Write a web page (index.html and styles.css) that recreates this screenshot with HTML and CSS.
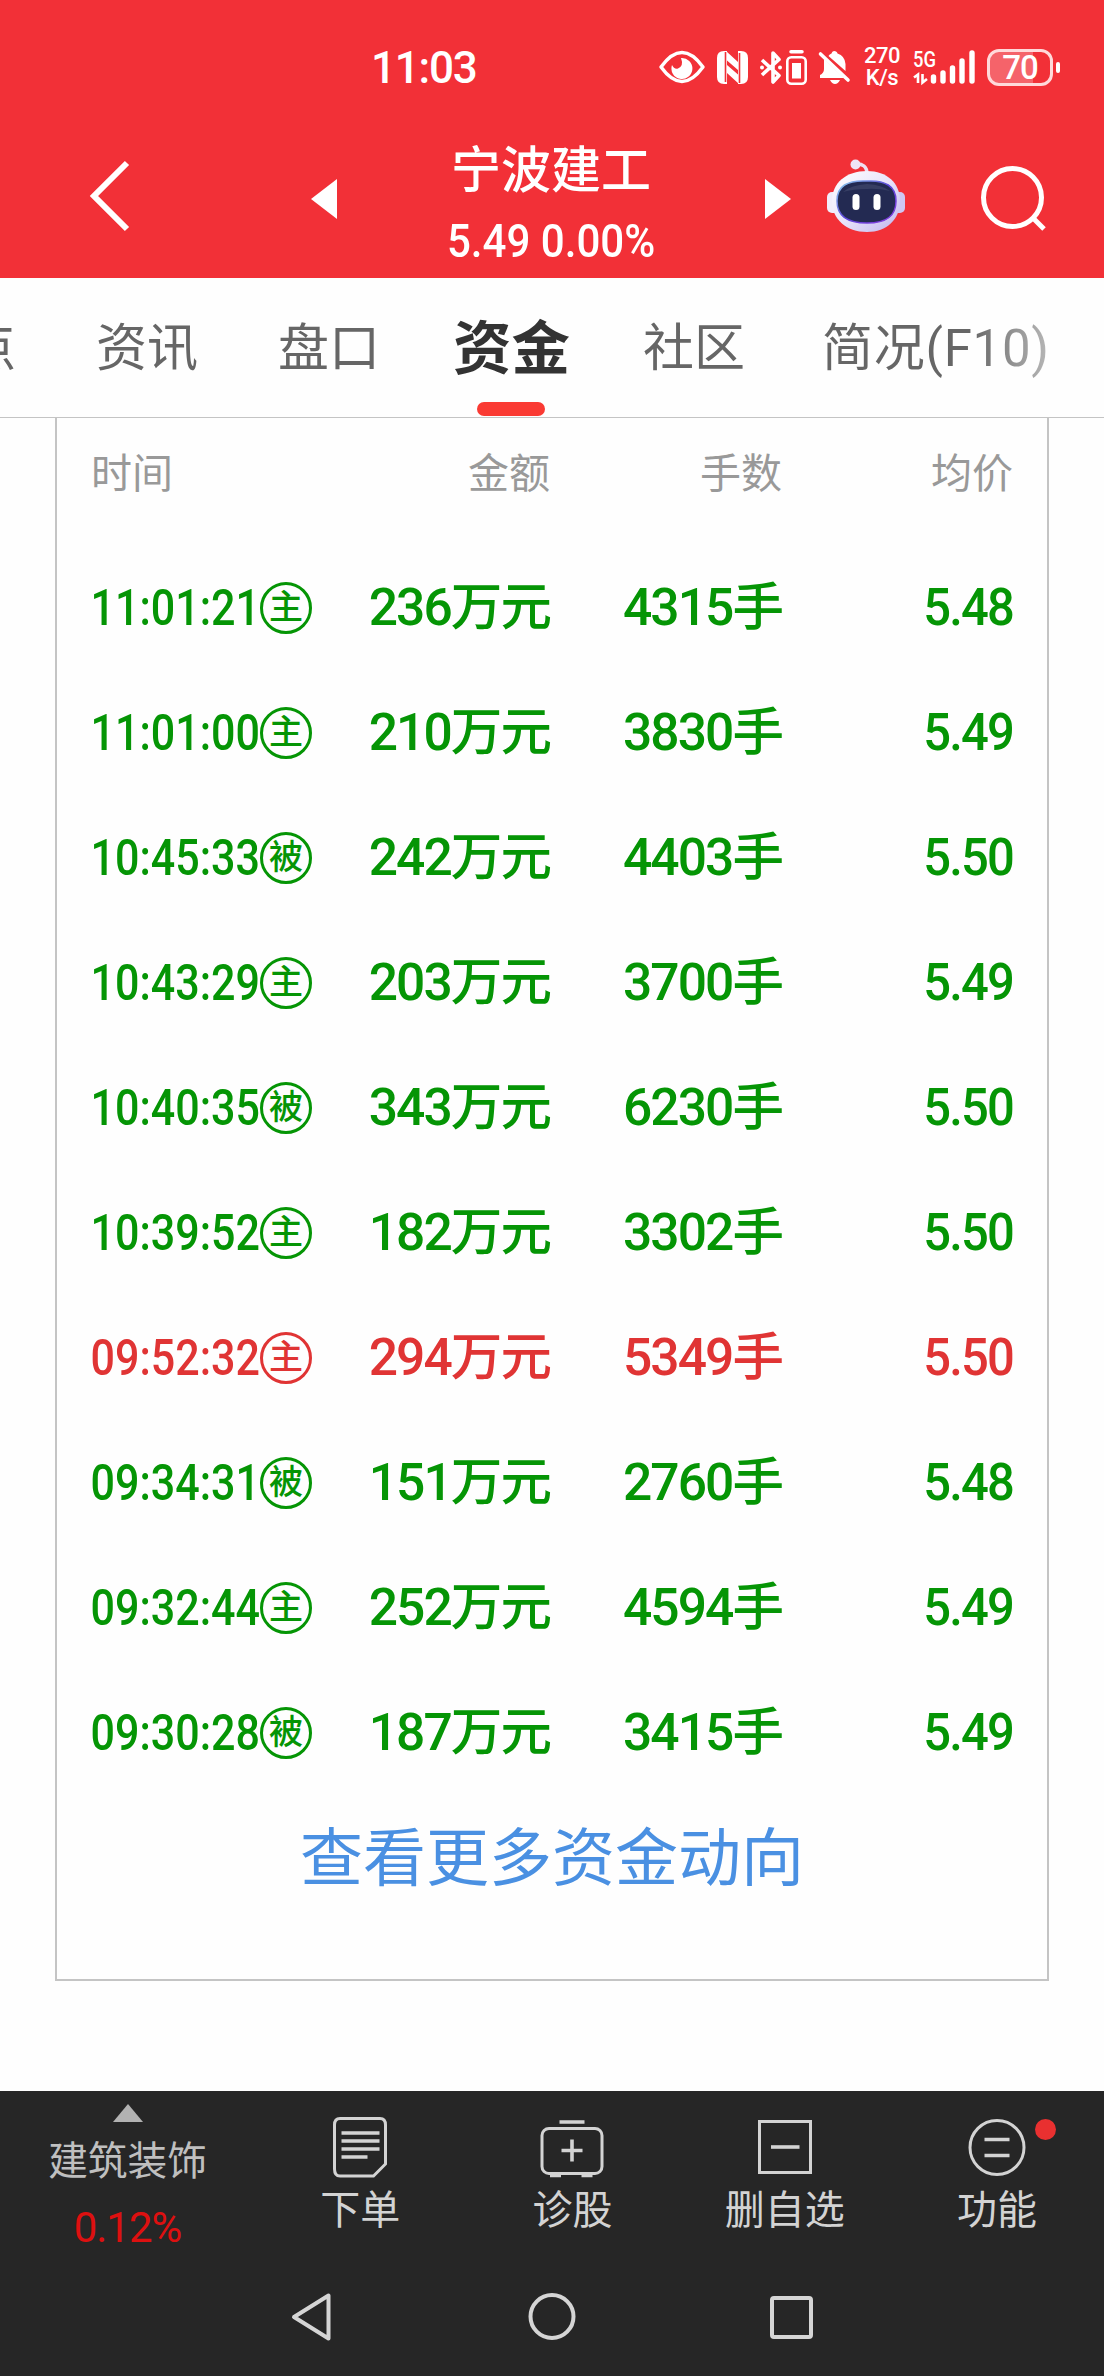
FILE: index.html
```html
<!DOCTYPE html>
<html lang="zh-CN">
<head>
  <meta charset="UTF-8" />
  <meta name="viewport" content="width=device-width, initial-scale=1.0" />
  <title>宁波建工 - 资金</title>
  <link rel="stylesheet" href="styles.css">
</head>
<body>
  <header class="header">
    <div class="status">
      <span class="clock">11:03</span>
      <svg class="eye" width="46" height="32" viewBox="0 0 46 32">
        <path d="M2 16 Q23 -13 44 16 Q23 45 2 16Z" fill="none" stroke="#fff" stroke-width="3.5" stroke-linejoin="round"/>
        <path d="M22 7 A10.5 10.5 0 1 1 13 14 Q15 18.500 19 17.500 Q25 15 22 7Z" fill="#fff"/>
      </svg>
      <svg class="nfc" width="31" height="33" viewBox="0 0 31 33">
        <path d="M7 0H10V33H7Q0 33 0 26V7Q0 0 7 0Z M21 0H24Q31 0 31 7V26Q31 33 24 33H21Z" fill="#fff"/>
        <path d="M9 0L21 11V19L10 9.500V33H7V0Z M22 33L10 22V14L21 23.500V0H24V33Z" fill="#fff"/>
        <path d="M8.500 1V31 M22.500 2V32" stroke="#f23037" stroke-width="1.600"/>
      </svg>
      <svg class="bt" width="23" height="35" viewBox="0 0 23 35">
        <path d="M2 10L19 25.500L13 32V3L19 9.500L2 25" fill="none" stroke="#fff" stroke-width="3.600" stroke-linejoin="round"/>
        <circle cx="2" cy="17.500" r="2" fill="#fff"/>
        <circle cx="20" cy="17.500" r="2" fill="#fff"/>
      </svg>
      <svg class="cell" width="21" height="35" viewBox="0 0 21 35">
        <path d="M5 1.800H16" stroke="#fff" stroke-width="3.500" stroke-linecap="round"/>
        <rect x="1.300" y="7.300" width="18.400" height="26.400" rx="4" fill="none" stroke="#fff" stroke-width="2.600"/>
        <rect x="6" y="13" width="9" height="15.500" fill="#fff"/>
      </svg>
      <svg class="bell" width="31" height="34" viewBox="0 0 31 34">
        <path d="M15 1Q18 1 18.500 3.500Q26 6 26.500 14V21L9.500 6Q10.500 4 12.500 3.500Q13 1 15 1Z" fill="#fff"/>
        <path d="M5 9L25 28H1V25Q5 23 5 19Z" fill="#fff"/>
        <path d="M11 30H21Q19 34 16 34Q13 34 11 30Z" fill="#fff"/>
        <path d="M1.500 4L29 30" stroke="#fff" stroke-width="3.600" stroke-linecap="round"/>
      </svg>
      <div class="speed"><span>270</span><span>K/s</span></div>
      <svg class="signal" width="63" height="36" viewBox="0 0 63 36">
        <text x="0" y="18" class="net" textLength="23" lengthAdjust="spacingAndGlyphs">5G</text>
        <path d="M1 28.500L5 25.500V34 M9.500 25V33.500L14 30" fill="none" stroke="#fff" stroke-width="2.600"/>
        <path d="M20.500 28V32M30 24V32M39.500 19V32M49 12V32M59 4V32" stroke="#fff" stroke-width="5.400" stroke-linecap="round"/>
      </svg>
      <div class="battery"><b>70</b></div>
      <i class="battery-tip"></i>
    </div>

    <div class="titlebar">
      <svg class="back" width="42" height="74" viewBox="0 0 42 74">
        <path d="M39 4L6 37L39 70" fill="none" stroke="#fff" stroke-width="6"/>
      </svg>
      <svg class="prev" width="26" height="40" viewBox="0 0 26 40"><path d="M0 20L26 0V40Z" fill="#fff"/></svg>
      <div class="stock">
        <h1>宁波建工</h1>
        <p><span>5.49 0.00%</span></p>
      </div>
      <svg class="next" width="26" height="40" viewBox="0 0 26 40"><path d="M26 20L0 0V40Z" fill="#fff"/></svg>
      <svg class="robot" width="80" height="74" viewBox="0 0 80 74">
        <defs>
          <linearGradient id="shell" x1="0" y1="0" x2="1" y2="1">
            <stop offset="0" stop-color="#ffffff"/>
            <stop offset=".5" stop-color="#e9e4fa"/>
            <stop offset="1" stop-color="#bfb4ee"/>
          </linearGradient>
          <linearGradient id="rim" x1="0" y1="0" x2="1" y2="1">
            <stop offset="0" stop-color="#8fd3ee"/>
            <stop offset=".5" stop-color="#5b45d8"/>
            <stop offset="1" stop-color="#8a3be0"/>
          </linearGradient>
        </defs>
        <path d="M29 5Q41 4 41 15" fill="none" stroke="#efdff0" stroke-width="3.500"/>
        <circle cx="29.500" cy="5.500" r="5" fill="#efe3f6"/>
        <rect x="1" y="33" width="14" height="21" rx="5" fill="#f1edfb"/>
        <rect x="65" y="33" width="14" height="21" rx="5" fill="#cfc6f2"/>
        <path d="M41 12C61 12 74 24 74 42C74 60 61 73 41 73C20 73 6 60 6 42C6 24 20 12 41 12Z" fill="url(#shell)"/>
        <path d="M41 22C59 21 70 27 70 42C70 57 61 64 41 64C21 64 11 57 11 42C11 27 21 21 41 22Z" fill="#232a52" stroke="url(#rim)" stroke-width="1.500"/>
        <path d="M17 33Q25 26 41 25Q56 26 64 32Q50 29 41 30Q27 30 17 33Z" fill="#454c70" opacity=".6"/>
        <rect x="26.500" y="35" width="7" height="16" rx="3.500" fill="#fff"/>
        <rect x="47.500" y="35" width="7" height="16" rx="3.500" fill="#fff"/>
      </svg>
      <svg class="search" width="66" height="66" viewBox="0 0 66 66">
        <circle cx="31.500" cy="31.500" r="29" fill="none" stroke="#fff" stroke-width="5"/>
        <path d="M52 52L63 63" stroke="#fff" stroke-width="5"/>
      </svg>
    </div>
  </header>

  <nav class="tabs">
    <a class="tab first">点</a>
    <a class="tab">资讯</a>
    <a class="tab">盘口</a>
    <a class="tab active">资金</a>
    <a class="tab">社区</a>
    <a class="tab last">简况(F10)</a>
  </nav>

  <main class="card">
    <div class="row head"><span>时间</span><span>金额</span><span>手数</span><span>均价</span></div>
    <div class="list">
      <div class="row"><span class="time"><b>11:01:21</b><i>主</i></span><span>236万元</span><span>4315手</span><span class="price">5.48</span></div>
      <div class="row"><span class="time"><b>11:01:00</b><i>主</i></span><span>210万元</span><span>3830手</span><span class="price">5.49</span></div>
      <div class="row"><span class="time"><b>10:45:33</b><i>被</i></span><span>242万元</span><span>4403手</span><span class="price">5.50</span></div>
      <div class="row"><span class="time"><b>10:43:29</b><i>主</i></span><span>203万元</span><span>3700手</span><span class="price">5.49</span></div>
      <div class="row"><span class="time"><b>10:40:35</b><i>被</i></span><span>343万元</span><span>6230手</span><span class="price">5.50</span></div>
      <div class="row"><span class="time"><b>10:39:52</b><i>主</i></span><span>182万元</span><span>3302手</span><span class="price">5.50</span></div>
      <div class="row up"><span class="time"><b>09:52:32</b><i>主</i></span><span>294万元</span><span>5349手</span><span class="price">5.50</span></div>
      <div class="row"><span class="time"><b>09:34:31</b><i>被</i></span><span>151万元</span><span>2760手</span><span class="price">5.48</span></div>
      <div class="row"><span class="time"><b>09:32:44</b><i>主</i></span><span>252万元</span><span>4594手</span><span class="price">5.49</span></div>
      <div class="row"><span class="time"><b>09:30:28</b><i>被</i></span><span>187万元</span><span>3415手</span><span class="price">5.49</span></div>
    </div>
    <a class="more">查看更多资金动向</a>
  </main>

  <footer class="footer">
    <div class="toolbar">
      <div class="sector">
        <svg width="30" height="18" viewBox="0 0 30 18"><path d="M15 0L30 18H0Z" fill="#b2b2b2"/></svg>
        <span class="sector-name">建筑装饰</span>
        <span class="sector-rate">0.12%</span>
      </div>
      <div class="tool">
        <svg width="64" height="64" viewBox="0 0 64 64">
          <path d="M12 5.500H52Q57.500 5.500 57.500 12V51L45.500 63H12Q6.500 63 6.500 56V12Q6.500 5.500 12 5.500Z"/>
          <path d="M13.500 20H51.500M13.500 28H51.500M13.500 36H51.500M13.500 44H39.500" class="thick"/>
        </svg>
        <span>下单</span>
      </div>
      <div class="tool">
        <svg width="64" height="64" viewBox="0 0 64 64">
          <rect x="2" y="15.500" width="60" height="45" rx="7"/>
          <path d="M19.500 9H44.500M10 62.500H21M41.500 62.500H52.500M21.500 37.500H42.500M32 26.500V48.500" class="thick"/>
        </svg>
        <span>诊股</span>
      </div>
      <div class="tool">
        <svg width="64" height="64" viewBox="0 0 64 64">
          <rect x="6.500" y="8.500" width="51" height="51"/>
          <path d="M18 34H46.500" class="thick"/>
        </svg>
        <span>删自选</span>
      </div>
      <div class="tool">
        <svg width="64" height="64" viewBox="0 0 64 64">
          <circle cx="32" cy="34.500" r="27"/>
          <path d="M19.500 26.500H44.500M19.500 42.500H44.500" class="thick"/>
        </svg>
        <span>功能</span>
        <i class="dot"></i>
      </div>
    </div>

    <div class="navkeys">
      <svg width="48" height="48" viewBox="0 0 48 48"><path d="M6 24L40.500 2.500V45.500Z"/></svg>
      <svg width="48" height="48" viewBox="0 0 48 48"><circle cx="24" cy="23.500" r="21.500"/></svg>
      <svg width="48" height="48" viewBox="0 0 48 48"><rect x="4" y="5" width="39" height="39" rx="2"/></svg>
    </div>
  </footer>
</body>
</html>
```

FILE: styles.css
```css
* {
  box-sizing: border-box;
}

body {
  margin: 0;
  width: 1104px;
  height: 2376px;
  display: flex;
  flex-direction: column;
  overflow: hidden;
  background: #fefefe;
  font-family: Roboto, "Noto Sans CJK SC", sans-serif;
}

svg {
  display: block;
  flex: none;
  overflow: visible;
}

i {
  font-style: normal;
}

/* header */
.header {
  height: 278px;
  background: #f23037;
  color: #fff;
}

.status {
  height: 90px;
  padding: 44px 0 0 371px;
  display: flex;
  align-items: center;
}

.clock {
  width: 288px;
  padding-top: 2px;
  font-size: 44px;
  font-weight: 500;
  line-height: 48px;
  letter-spacing: -1.2px;
}

.nfc { margin-left: 12px; }
.bt { margin-left: 12px; }
.cell { margin-left: 3px; }
.bell { margin-left: 12px; }

.speed {
  width: 36px;
  margin: 0 13px 0 14px;
  display: flex;
  flex-direction: column;
  align-items: center;
  font-size: 22px;
  font-weight: 500;
  line-height: 22px;
  letter-spacing: -0.5px;
}

.net {
  fill: #fff;
  font-size: 22px;
  font-weight: 500;
}

.battery {
  width: 66px;
  height: 37px;
  margin-left: 11px;
  border: 3px solid #ffd9da;
  border-radius: 12px;
  background: linear-gradient(to right, #f5636a 43px, transparent 43px);
  font-size: 33px;
  line-height: 31px;
  text-align: center;
}

.battery b {
  font-weight: 500;
  letter-spacing: -1px;
}

.battery-tip {
  width: 4px;
  height: 11px;
  margin-left: 3px;
  border-radius: 2px;
  background: #fff;
}

.titlebar {
  height: 188px;
  padding: 30px 0 0 88px;
  display: flex;
  align-items: flex-start;
}

.back { margin-top: 39px; }
.prev { margin: 59px 0 0 181px; }
.next { margin-top: 59px; }
.robot { margin: 39px 0 0 35px; }
.search { margin: 46px 0 0 75px; }

.stock {
  flex: 0 0 428px;
  text-align: center;
}

.stock h1 {
  margin: 15px 0 0;
  font-size: 50px;
  font-weight: 500;
  line-height: 72px;
}

.stock p {
  margin: 6px 0 0;
  font-size: 46.5px;
  font-weight: 500;
  line-height: 56px;
}

.stock p span {
  display: inline-block;
  transform: scaleX(0.905);
}

/* tabs */
.tabs {
  height: 140px;
  padding-top: 3px;
  display: flex;
  align-items: center;
  gap: 80px;
  border-bottom: 1px solid #c4c4c4;
  color: #666;
  font-size: 51px;
  line-height: 60px;
  white-space: nowrap;
}

.tab {
  flex: none;
}

.tab.first {
  margin-left: -35px;
}

.tab.active {
  margin: 0 -7px;
  position: relative;
  color: #333;
  font-size: 58.5px;
  font-weight: 700;
}

.tab.active::after {
  content: "";
  position: absolute;
  left: 24px;
  bottom: -37px;
  width: 68px;
  height: 14px;
  border-radius: 7px;
  background: #fa3a33;
}

.tab.last {
  margin-left: -3px;
  background: linear-gradient(to right, #666 65%, #b8b8b8);
  background-clip: text;
  -webkit-background-clip: text;
  color: transparent;
  letter-spacing: 0.7px;
}

/* fund flow card */
.card {
  width: 994px;
  height: 1563px;
  margin: 0 0 110px 55px;
  border: 2px solid #c4c4c4;
  border-top: 0;
}

.row {
  height: 125px;
  padding: 0 34px;
  display: grid;
  grid-template-columns: 221px 238px 232px 1fr;
  align-items: center;
  color: #059505;
  font-size: 51.5px;
  font-weight: 500;
  line-height: 60px;
  text-align: right;
}

.row span {
  white-space: nowrap;
  letter-spacing: -1.9px;
}

.row .price {
  transform: scaleX(0.95);
  transform-origin: right;
}

.row.up {
  color: #e03434;
}

.row.head {
  height: 108px;
  padding-top: 3px;
  color: #999;
  font-size: 41px;
  font-weight: 400;
}

.row.head span {
  letter-spacing: 0;
}

.row.head span:first-child {
  text-align: left;
}

.list {
  padding-top: 19px;
}

.time {
  display: flex;
  align-items: center;
  justify-content: flex-end;
}

.row .time b {
  font-size: 50px;
  font-weight: 500;
  letter-spacing: 0;
  transform: scaleX(0.86);
  transform-origin: right;
}

.time i {
  width: 52px;
  height: 52px;
  flex: none;
  border: 3px solid;
  border-radius: 50%;
  font-size: 34px;
  font-weight: 500;
  line-height: 45px;
  letter-spacing: 0;
  text-align: center;
}

.more {
  display: block;
  height: 123px;
  color: #4a90e2;
  font-size: 63px;
  line-height: 127px;
  text-align: center;
}

/* footer */
.footer {
  flex: 1;
  background: #262626;
  color: #d3d3d3;
}

.toolbar {
  height: 170px;
  padding-left: 22px;
  display: flex;
}

.sector {
  width: 211px;
  margin-right: 21px;
  padding-top: 13px;
  display: flex;
  flex-direction: column;
  align-items: center;
}

.sector-name {
  margin-top: 10px;
  color: #bfbfbf;
  font-size: 39.7px;
  line-height: 60px;
}

.sector-rate {
  margin-top: 6px;
  color: #dd1010;
  font-size: 42px;
  line-height: 60px;
  letter-spacing: -1px;
}

.tool {
  flex: none;
  width: 212.3px;
  padding-top: 22px;
  position: relative;
  display: flex;
  flex-direction: column;
  align-items: center;
  font-size: 40px;
  line-height: 60px;
}

.tool svg {
  fill: none;
  stroke: #d3d3d3;
  stroke-width: 3;
}

.tool .thick {
  stroke-width: 3.6;
}

.tool span {
  margin-top: 4px;
}

.dot {
  position: absolute;
  left: 144px;
  top: 28px;
  width: 21px;
  height: 21px;
  border-radius: 50%;
  background: #e93030;
}

.navkeys {
  padding: 32px 288px 0;
  display: flex;
  justify-content: space-between;
}

.navkeys svg {
  fill: none;
  stroke: #d5d5d5;
  stroke-width: 4;
  stroke-linejoin: round;
}
```
